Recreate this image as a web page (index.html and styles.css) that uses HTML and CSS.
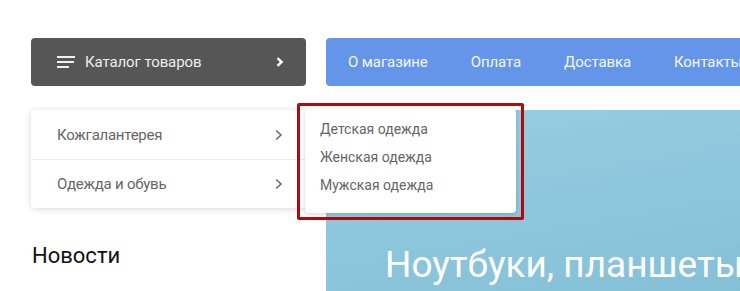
FILE: index.html
```html
<!DOCTYPE html>
<html lang="ru">
<head>
<meta charset="utf-8">
<title>Каталог</title>
<link rel="stylesheet" href="styles.css">
</head>
<body>
<div class="page">
  <aside class="sidebar">
    <button class="catalog">
      <svg class="burger" width="18" height="12" viewBox="0 0 18 12"><rect x="0" y="0" width="18" height="2"/><rect x="0" y="5" width="17" height="2"/><rect x="0" y="10" width="12" height="2"/></svg>
      <span class="catalog-label">Каталог товаров</span>
      <svg class="catalog-chev" width="8" height="10" viewBox="0 0 8 10"><path d="M1.5 1.2 L5.6 5 L1.5 8.8" fill="none" stroke="#fff" stroke-width="2.4"/></svg>
    </button>
    <ul class="menu">
      <li class="menu-item">
        <span>Кожгалантерея</span>
        <svg class="menu-chev" width="8" height="12" viewBox="0 0 8 12"><path d="M1.2 1.5 L6 6 L1.2 10.5" fill="none" stroke="#666" stroke-width="1.5"/></svg>
        <div class="submenu-frame">
          <ul class="submenu">
            <li>Детская одежда</li>
            <li>Женская одежда</li>
            <li>Мужская одежда</li>
          </ul>
        </div>
      </li>
      <li class="menu-item">
        <span>Одежда и обувь</span>
        <svg class="menu-chev" width="8" height="12" viewBox="0 0 8 12"><path d="M1.2 1.5 L6 6 L1.2 10.5" fill="none" stroke="#666" stroke-width="1.5"/></svg>
      </li>
    </ul>
    <h2 class="news-title">Новости</h2>
  </aside>
  <main class="main">
    <nav class="topnav">
      <a>О магазине</a>
      <a>Оплата</a>
      <a>Доставка</a>
      <a>Контакты</a>
    </nav>
    <section class="banner">
      <h1 class="banner-title">Ноутбуки, планшеты</h1>
    </section>
  </main>
</div>
</body>
</html>
```
FILE: styles.css
```css
html, body {
  margin: 0;
  padding: 0;
  background: #fff;
  overflow: hidden;
}
body {
  font-family: Roboto, "Liberation Sans", sans-serif;
  width: 740px;
  height: 291px;
}
.page {
  display: flex;
  align-items: flex-start;
  gap: 20px;
  padding: 38px 0 0 31px;
  width: 740px;
  height: 291px;
  box-sizing: border-box;
  overflow: hidden;
}
.sidebar {
  width: 275px;
  flex: none;
  display: flex;
  flex-direction: column;
}
.catalog {
  flex: none;
  height: 48px;
  border: 0;
  border-radius: 4px;
  background: #555655;
  display: flex;
  align-items: center;
  padding: 0 22px 0 26px;
  font-family: inherit;
  color: #eee;
  cursor: pointer;
}
.burger rect { fill: #f2f2f2; }
.catalog-label {
  margin-left: 10px;
  font-size: 15px;
  letter-spacing: -0.1px;
  flex: 1;
  text-align: left;
}
.catalog-chev { display: block; }
.menu {
  flex: none;
  list-style: none;
  margin: 24px 0 0;
  padding: 0;
  background: #fff;
  border-radius: 4px;
  box-shadow: 0 1px 7px rgba(0,0,0,0.16);
  position: relative;
  z-index: 2;
}
.menu-item {
  height: 49px;
  display: flex;
  align-items: center;
  justify-content: space-between;
  padding: 0 23px 0 26px;
  font-size: 15px;
  letter-spacing: -0.25px;
  color: #666;
  position: relative;
}
.menu-item + .menu-item { border-top: 1px solid #ececec; height: 48px; }
.menu-chev { display: block; }
.submenu-frame {
  position: absolute;
  left: 266px;
  top: -7px;
  border: 3px solid #b00a0a;
  border-radius: 2px;
  padding: 3px 5px 4px 5px;
  z-index: 5;
  letter-spacing: 0;
}
.submenu {
  list-style: none;
  margin: 0;
  padding: 6px 15px 14px 15px;
  width: 181px;
  background: #fff;
  border-radius: 4px;
  box-shadow: 0 1px 4px rgba(0,0,0,0.18);
}
.submenu li {
  font-size: 14px;
  line-height: 28px;
  color: #666;
  white-space: nowrap;
}
.news-title {
  flex: none;
  margin: 35px 0 0 1px;
  font-size: 22px;
  line-height: 26px;
  font-weight: 400;
  color: #111;
}
.main {
  flex: none;
  width: 600px;
  display: flex;
  flex-direction: column;
}
.topnav {
  flex: none;
  height: 48px;
  background: #6495e8;
  border-radius: 4px;
  display: flex;
  align-items: center;
  gap: 43px;
  padding-left: 22px;
}
.topnav a {
  color: #f4f7fd;
  font-size: 15px;
  letter-spacing: -0.1px;
  white-space: nowrap;
}
.banner {
  flex: none;
  margin-top: 24px;
  height: 200px;
  background: linear-gradient(170deg, #96cde1 0%, #8cc6dc 50%, #7fbdd3 100%);
  padding: 133px 0 0 59px;
  box-sizing: border-box;
}
.banner-title {
  margin: 0;
  font-size: 37px;
  line-height: 1.2;
  font-weight: 400;
  color: #fff;
  white-space: nowrap;
}
```
